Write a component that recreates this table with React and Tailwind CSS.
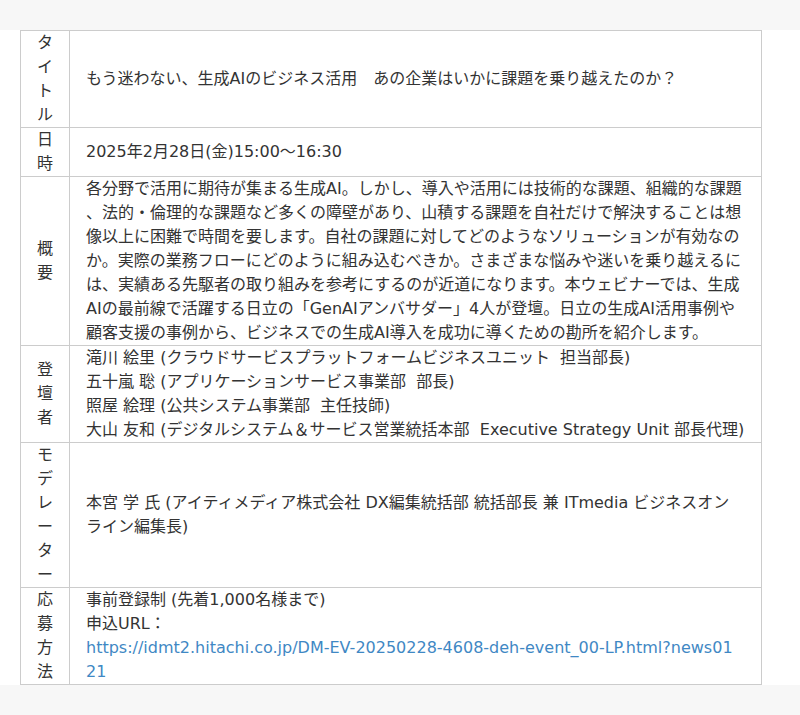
import React from 'react'

const rows = [
  {
    label: 'タイトル',
    body: <p>もう迷わない、生成AIのビジネス活用　あの企業はいかに課題を乗り越えたのか？</p>,
  },
  {
    label: '日時',
    body: <p>2025年2月28日(金)15:00〜16:30</p>,
  },
  {
    label: '概要',
    body: (
      <p>
        各分野で活用に期待が集まる生成AI。しかし、導入や活用には技術的な課題、組織的な課題、法的・倫理的な課題など多くの障壁があり、山積する課題を自社だけで解決することは想像以上に困難で時間を要します。自社の課題に対してどのようなソリューションが有効なのか。実際の業務フローにどのように組み込むべきか。さまざまな悩みや迷いを乗り越えるには、実績ある先駆者の取り組みを参考にするのが近道になります。本ウェビナーでは、生成AIの最前線で活躍する日立の「GenAIアンバサダー」4人が登壇。日立の生成AI活用事例や顧客支援の事例から、ビジネスでの生成AI導入を成功に導くための勘所を紹介します。
      </p>
    ),
  },
  {
    label: '登壇者',
    body: (
      <>
        <p>滝川 絵里 (クラウドサービスプラットフォームビジネスユニット{'\u00a0 '}担当部長)</p>
        <p>五十嵐 聡 (アプリケーションサービス事業部{'\u00a0 '}部長)</p>
        <p>照屋 絵理 (公共システム事業部{'\u00a0 '}主任技師)</p>
        <p>大山 友和 (デジタルシステム＆サービス営業統括本部{'\u00a0 '}Executive Strategy Unit 部長代理)</p>
      </>
    ),
  },
  {
    label: 'モデレーター',
    body: <p>本宮 学 氏 (アイティメディア株式会社 DX編集統括部 統括部長 兼 ITmedia ビジネスオンライン編集長)</p>,
  },
  {
    label: '応募方法',
    body: (
      <>
        <p>事前登録制 (先着1,000名様まで)</p>
        <p>申込URL：</p>
        <a href="#" className="text-[#3f88c4] [overflow-wrap:anywhere]">
          https://idmt2.hitachi.co.jp/DM-EV-20250228-4608-deh-event_00-LP.html?news01
          <br />
          21
        </a>
      </>
    ),
  },
]

export default function App() {
  return (
    <div
      className="bg-[#f7f7f7] py-[30px] text-[16px] leading-6 text-[#333]"
      style={{ fontFamily: '"DejaVu Sans", "Noto Sans CJK JP", sans-serif' }}
    >
      <div className="bg-white pl-5 pr-[38px]">
        <table className="w-full border-collapse">
          <tbody>
            {rows.map((row) => (
              <tr key={row.label}>
                <th className="w-[49px] border border-[#ccc] p-0 text-center align-middle font-normal">
                  {row.label.split('').map((ch, i) => (
                    <div key={i}>{ch}</div>
                  ))}
                </th>
                <td className="border border-[#ccc] px-4 py-0 align-middle [line-break:anywhere]">
                  {row.body}
                </td>
              </tr>
            ))}
          </tbody>
        </table>
      </div>
    </div>
  )
}
